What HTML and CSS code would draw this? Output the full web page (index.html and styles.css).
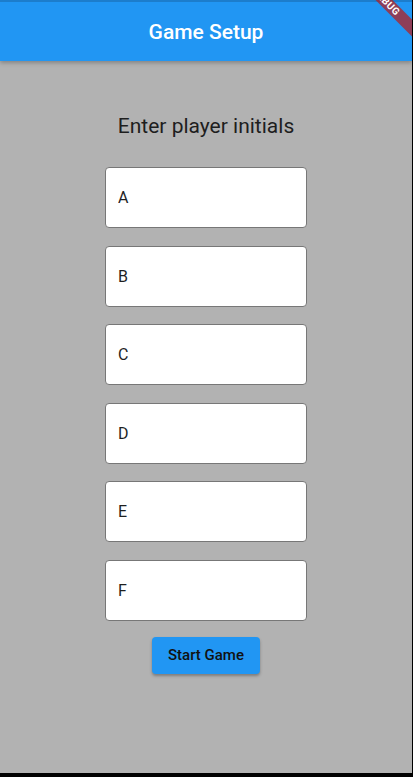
FILE: index.html
```html
<!DOCTYPE html>
<html lang="en">
<head>
    <meta charset="UTF-8">
    <meta name="viewport" content="width=device-width, initial-scale=1.0">
    <title>Game Setup</title>
    <link rel="stylesheet" href="styles.css">
</head>
<body>
    <div class="app">
        <header class="app-bar">
            <div class="status-strip"></div>
            <h1 class="app-title">Game Setup</h1>
            <div class="debug-ribbon">DEBUG</div>
        </header>
        <main class="setup">
            <h2 class="setup-title">Enter player initials</h2>
            <form id="setupForm" class="player-list">
                <input class="player-input" type="text" value="A">
                <input class="player-input" type="text" value="B">
                <input class="player-input" type="text" value="C">
                <input class="player-input" type="text" value="D">
                <input class="player-input" type="text" value="E">
                <input class="player-input" type="text" value="F">
                <button type="submit" class="start-btn">Start Game</button>
            </form>
        </main>
    </div>
    <script>
        document.getElementById('setupForm').addEventListener('submit', function(e) {
            e.preventDefault();
        });
    </script>
</body>
</html>
```

FILE: styles.css
```css
html, body {
    margin: 0;
    padding: 0;
    background-color: #000;
}
body {
    font-family: Roboto, "Noto Sans", Arial, sans-serif;
    height: 777px;
    overflow: hidden;
}
.app {
    width: 412px;
    height: 773px;
    background-color: #b2b2b2;
}
.app-bar {
    position: relative;
    height: 61px;
    background-color: #2196f3;
    box-shadow: 0 2px 4px rgba(0, 0, 0, 0.25);
    overflow: hidden;
    display: flex;
    flex-direction: column;
}
.status-strip {
    height: 2px;
    background-color: #1c7dcc;
}
.app-title {
    flex: 1;
    margin: 0;
    display: flex;
    align-items: center;
    justify-content: center;
    color: #fff;
    font-size: 21px;
    font-weight: 500;
}
/* flutter style debug banner in the corner */
.debug-ribbon {
    position: absolute;
    left: 335.5px;
    top: -4px;
    width: 100px;
    height: 12px;
    line-height: 12px;
    transform: rotate(45deg);
    background-color: rgba(183, 28, 28, 0.72);
    color: #fff;
    font-size: 10px;
    font-weight: 700;
    text-align: center;
    letter-spacing: 0.5px;
}
.setup {
    display: flex;
    flex-direction: column;
    align-items: center;
    padding-top: 53px;
}
.setup-title {
    margin: 0 0 28px;
    font-size: 21px;
    line-height: 25px;
    font-weight: 400;
    color: #1e1e1e;
}
.player-list {
    display: flex;
    flex-direction: column;
    align-items: center;
    gap: 17.6px;
}
.player-input {
    box-sizing: border-box;
    width: 202px;
    height: 61px;
    padding: 0 12px;
    border: 1px solid #777;
    border-radius: 4px;
    background: #fff;
    font-family: inherit;
    font-size: 16px;
    color: #1f1f1f;
    outline: none;
}
.start-btn {
    margin-top: -1.6px;
    height: 37px;
    padding: 0 16px;
    border: none;
    border-radius: 4px;
    background-color: #2196f3;
    box-shadow: 0 2px 3px rgba(0, 0, 0, 0.3);
    font-family: inherit;
    font-size: 15px;
    font-weight: 500;
    color: #111;
    cursor: pointer;
}
```
